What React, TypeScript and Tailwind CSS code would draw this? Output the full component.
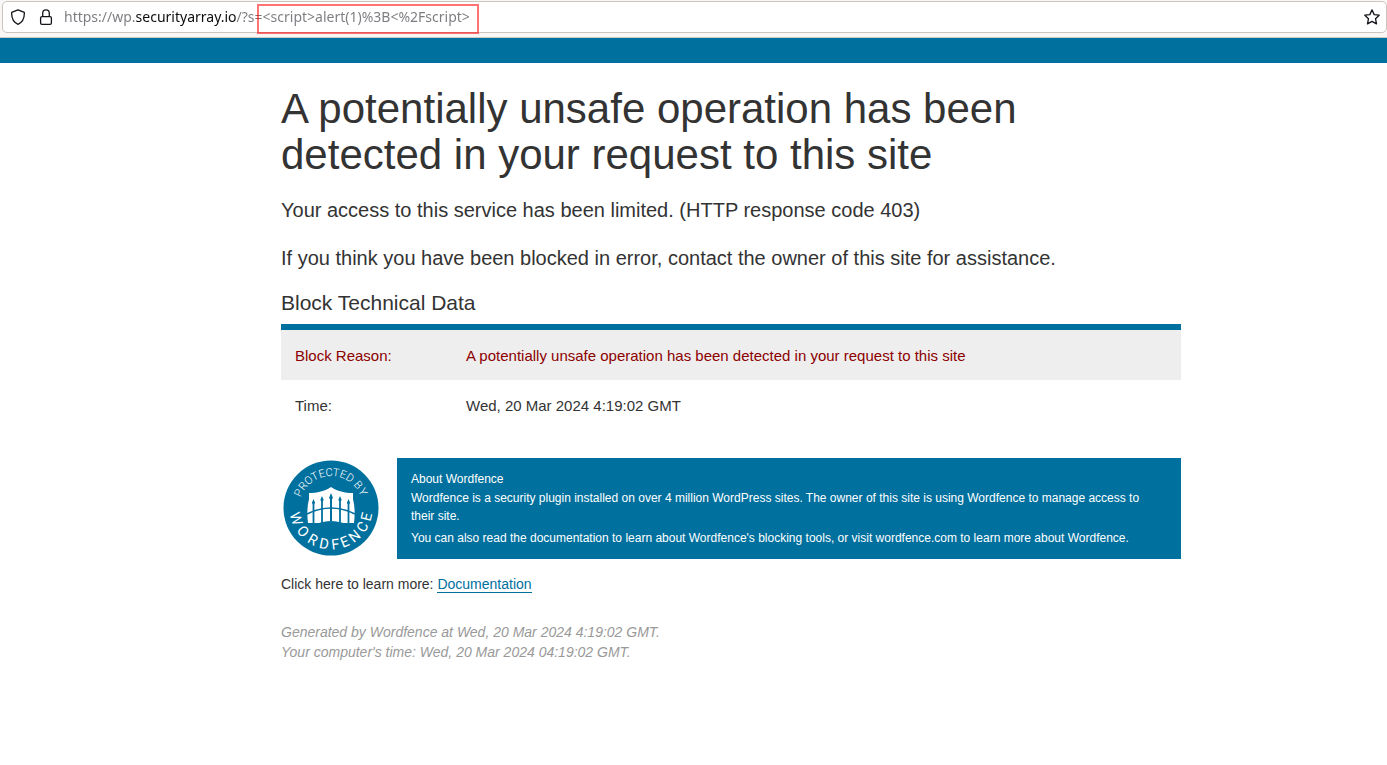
import { useState } from 'react'

interface BlockRow {
  label: string
  value: string
  isReason?: boolean
}

const blockRows: BlockRow[] = [
  {
    label: 'Block Reason:',
    value: 'A potentially unsafe operation has been detected in your request to this site',
    isReason: true,
  },
  { label: 'Time:', value: 'Wed, 20 Mar 2024 4:19:02 GMT' },
]

// badge lettering: [letter, degrees around the circle]
const topLetters: [string, number][] = [
  ['P', -65], ['R', -52], ['O', -39], ['T', -27], ['E', -15], ['C', -3],
  ['T', 8], ['E', 20], ['D', 32], ['B', 50], ['Y', 63],
]

const bottomLetters: [string, number][] = [
  ['W', 73], ['O', 50], ['R', 30], ['D', 11], ['F', -7],
  ['E', -22], ['N', -40], ['C', -59], ['E', -76],
]

function ShieldIcon() {
  return (
    <svg viewBox="0 0 16 16" className="size-4 shrink-0" fill="none" stroke="#15141a" strokeWidth="1.3" strokeLinejoin="round" aria-hidden="true">
      <path d="M8 .8 14.3 3.4C14.6 8.9 12.6 13.4 8 15.3 3.4 13.4 1.4 8.9 1.7 3.4Z" />
    </svg>
  )
}

function LockIcon() {
  return (
    <svg viewBox="0 0 16 16" className="size-4 shrink-0" fill="none" stroke="#15141a" strokeWidth="1.3" aria-hidden="true">
      <rect x="2.6" y="7.7" width="10.8" height="7.6" rx="1.4" />
      <path d="M4.7 7.7V4.2a3.3 3.3 0 0 1 6.6 0v3.5" />
    </svg>
  )
}

function StarIcon() {
  return (
    <svg viewBox="0 0 16 16" className="size-4" fill="none" stroke="#15141a" strokeWidth="1.3" strokeLinejoin="round" aria-hidden="true">
      <path d="m8 .9 2.2 4.7 5 .6-3.7 3.5 1 5.2L8 12.4l-4.5 2.5 1-5.2L.8 6.2l5-.6Z" />
    </svg>
  )
}

function AddressBar() {
  const [url, setUrl] = useState('https://wp.securityarray.io/?s=<script>alert(1)%3B<%2Fscript>')

  return (
    <div className="h-[38px] border-b border-[#cdc9c3] bg-[#f8f7f5] pt-px pl-0.5">
      <div className="flex h-8 items-center rounded-[5px] border border-[#cbc6bd] bg-white pr-1.5 pl-[7px]">
        <ShieldIcon />
        <span className="w-3" />
        <LockIcon />
        <div className="relative ml-[10px] grow">
          {/* host name is darker than the rest of the address */}
          <input
            type="text"
            aria-label="Address"
            value={url}
            onChange={(e) => setUrl(e.target.value)}
            className="block h-6 w-full bg-[linear-gradient(90deg,#7b7b80_71px,#0c0c0d_71px,#0c0c0d_172px,#7b7b80_172px)] bg-clip-text pb-0.5 font-['Noto_Sans',sans-serif] text-[14px] text-transparent caret-black outline-none"
          />
          <span className="pointer-events-none absolute -top-px left-[193px] h-[30px] w-[222px] border-2 border-[#ff0000]/55" />
        </div>
        <button type="button" aria-label="Bookmark this page">
          <StarIcon />
        </button>
      </div>
    </div>
  )
}

function WordfenceLogo() {
  return (
    <svg viewBox="0 0 100 100" className="size-[100px] shrink-0" role="img" aria-label="Protected by Wordfence">
      <circle cx="50" cy="50" r="47.5" fill="#00709e" />
      <g fill="#fff" fontFamily="Roboto, sans-serif" textAnchor="middle">
        {topLetters.map(([letter, angle]) => (
          <text key={angle} x="50" y="18" fontSize="11" fontWeight="300" transform={`rotate(${angle} 50 50)`}>{letter}</text>
        ))}
        {bottomLetters.map(([letter, angle]) => (
          <text key={angle} x="50" y="91.5" fontSize="14.5" transform={`rotate(${angle} 50 50)`}>{letter}</text>
        ))}
      </g>
      <path d="M28 35c8 0 16-2 22-6 6 4 14 6 22 6v6c2 8 2 16 1 24H62c-3-1-7-2-12-2s-9 1-12 2H27c-1-8-1-16 1-24Z" fill="#fff" />
      <path
        d="m32.5 41 1.7 4-.8 1v19h-1.800v-19l-.8-1ZM41 38l1.700 4-.8 1v22h-1.800v-22l-.8-1ZM50 35l2 5-1 1v22h-2v-22l-1-1ZM59 38l1.700 4-.8 1v22h-1.800v-22l-.8-1ZM67.500 41l1.700 4-.8 1v19h-1.800v-19l-.8-1Z"
        fill="#00709e"
      />
      <path d="M26 56c16-8 32-8 48 0" fill="none" stroke="#00709e" strokeWidth="1.6" />
    </svg>
  )
}

export default function App() {
  return (
    <div className="min-h-screen bg-white font-['Liberation_Sans',Arial,sans-serif] text-[#333]">
      <AddressBar />
      <div className="h-[25px] bg-[#00709e]" />

      <div className="pl-[75px]">
        <main className="mx-auto max-w-[900px] pt-[23px]">
          <h1 className="text-[42px] leading-[46px]">
            A potentially unsafe operation has been detected in your request to this site
          </h1>
          <p className="mt-[18px] text-[20px] leading-7">
            Your access to this service has been limited. (HTTP response code 403)
          </p>
          <p className="mt-5 text-[20px] leading-7">
            If you think you have been blocked in error, contact the owner of this site for assistance.
          </p>

          <h2 className="mt-[18px] text-[21px] leading-[26px]">Block Technical Data</h2>
          <table className="mt-2 w-full border-t-[6px] border-[#00709e] text-left text-[15px] leading-5">
            <tbody>
              {blockRows.map((row) => (
                <tr key={row.label} className={row.isReason ? 'bg-[#eee] text-[#8c0000]' : ''}>
                  <th scope="row" className="w-[171px] px-[14px] pt-4 pb-[14px] font-normal">{row.label}</th>
                  <td className="px-[14px] pt-4 pb-[14px]">{row.value}</td>
                </tr>
              ))}
            </tbody>
          </table>

          <section className="mt-7 flex items-start gap-4">
            <WordfenceLogo />
            <div className="grow bg-[#00709e] py-3 pr-6 pl-[14px] text-[12px] leading-[18px] text-white">
              <h3 className="mb-px">About Wordfence</h3>
              <p>
                Wordfence is a security plugin installed on over 4 million WordPress sites. The owner of this site is
                using Wordfence to manage access to their site.
              </p>
              <p className="mt-1">
                You can also read the documentation to learn about Wordfence's blocking tools, or visit wordfence.com
                to learn more about Wordfence.
              </p>
            </div>
          </section>

          <p className="mt-[15px] text-[14px] leading-5">
            Click here to learn more:{' '}
            <a href="#documentation" className="border-b border-[#00709e] text-[#00709e]">Documentation</a>
          </p>
          <p className="mt-7 text-[14px] leading-5 text-[#999] italic">
            Generated by Wordfence at Wed, 20 Mar 2024 4:19:02 GMT.
            <br />
            Your computer's time: Wed, 20 Mar 2024 04:19:02 GMT.
          </p>
        </main>
      </div>
    </div>
  )
}
